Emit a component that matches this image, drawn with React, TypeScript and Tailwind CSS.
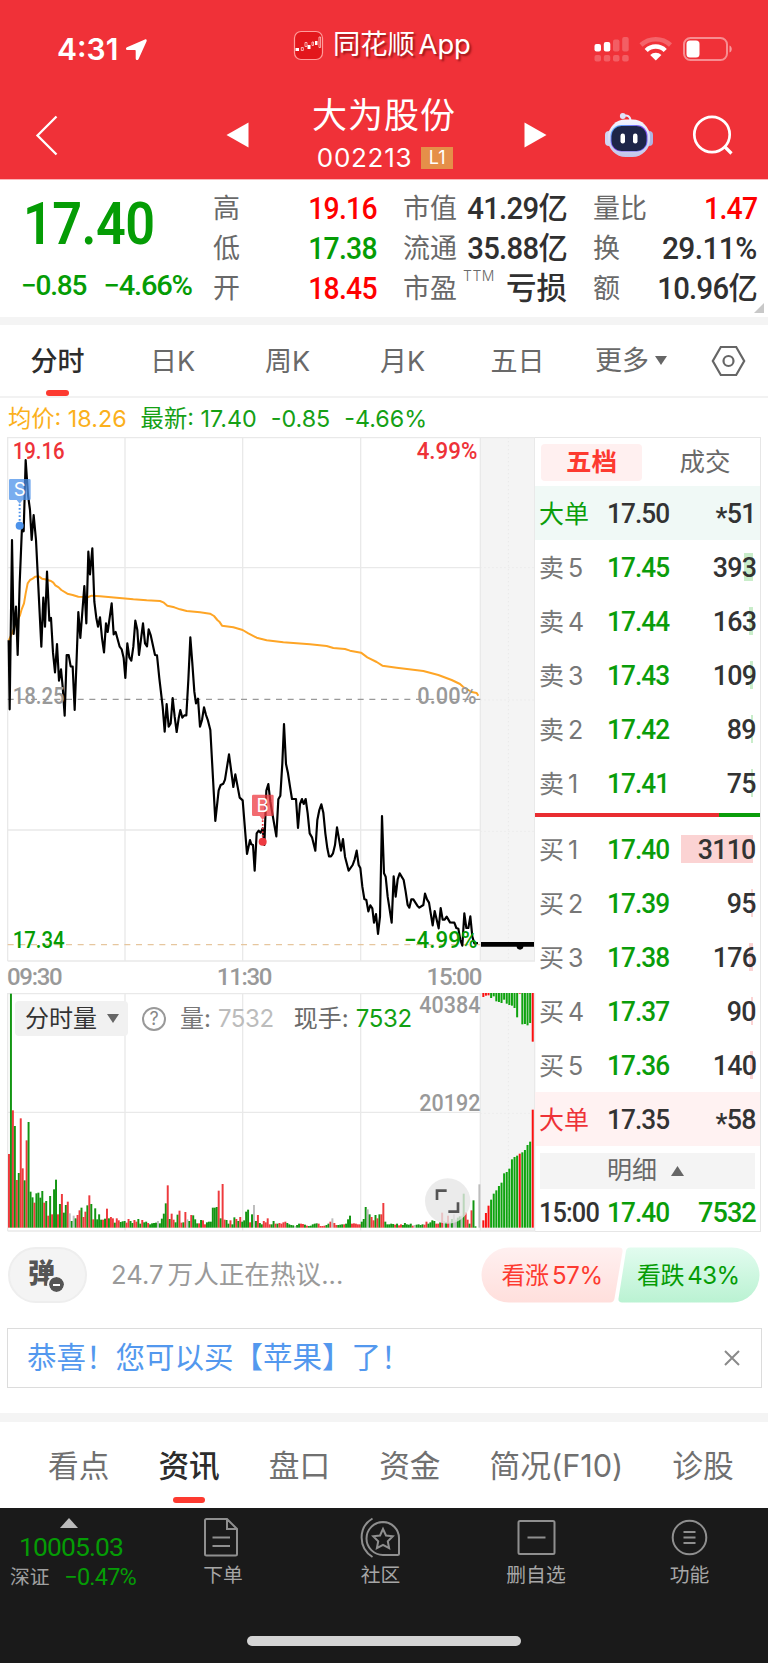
import type { ReactNode } from "react";
import clsx from "clsx";

type Tone = "up" | "down" | "ink";

const TONE_CLASS: Record<Tone, string> = {
  up: "text-[#ff0000]",
  down: "text-[#059c05]",
  ink: "text-[#303030]",
};

const NUM = "font-[Roboto,'Noto_Sans_CJK_SC',sans-serif]";

/* ---------- chart data (3 units per pixel) ---------- */

const PRICE_LINE =
  "26,610 29,817 36,309 41,591 48,509 53,654 59,440 66,269 71,283 77,69 84,174 90,219 95,309 101,234 108,309 115,449 124,629 130,482 135,569 141,404 148,551 153,543 159,647 165,706 171,621 177,731 183,697 188,749 194,836 200,654 206,654 212,688 218,689 224,819 229,689 235,525 241,603 253,447 259,559 265,344 270,412 277,334 283,494 289,543 294,569 300,541 306,603 312,646 318,559 323,585 335,499 341,592 347,585 359,629 365,637 371,663 376,723 382,619 388,661 394,671 400,629 406,551 412,579 417,654 429,559 435,619 441,628 446,577 452,594 465,654 471,655 478,724 488,809 494,884 500,801 506,869 512,859 518,783 524,839 530,885 536,844 541,819 547,842 553,835 559,835 565,729 571,601 577,679 583,764 588,799 594,785 600,869 606,849 612,811 618,834 624,851 631,879 646,1152 656,1060 662,1044 670,1040 675,1028 687,952 700,1050 706,1012 719,1082 728,1090 741,1251 750,1209 754,1222 759,1224 764,1301 770,1189 776,1181 782,1187 788,1174 793,1224 799,1061 805,1041 811,1094 817,1129 829,1198 835,1087 841,1076 847,979 852,861 858,981 864,1009 870,1049 876,1086 888,1086 894,1173 900,1101 906,1086 911,1101 917,1086 923,1129 929,1189 936,1201 946,1241 952,1149 958,1119 964,1102 970,1127 976,1189 982,1234 987,1258 993,1258 999,1249 1005,1224 1011,1171 1023,1241 1029,1206 1035,1259 1046,1301 1058,1284 1064,1267 1070,1241 1076,1284 1081,1293 1087,1349 1093,1386 1099,1389 1105,1423 1111,1405 1117,1414 1122,1457 1128,1431 1134,1491 1140,1439 1146,1137 1152,1309 1157,1319 1163,1379 1175,1457 1181,1318 1187,1379 1193,1327 1199,1309 1211,1329 1217,1364 1223,1404 1228,1412 1234,1387 1240,1387 1252,1406 1258,1412 1270,1404 1275,1370 1281,1387 1287,1397 1298,1465 1304,1422 1316,1474 1322,1413 1328,1448 1334,1448 1340,1439 1350,1456 1363,1457 1369,1473 1375,1475 1381,1509 1387,1526 1393,1429 1399,1473 1405,1473 1411,1438 1417,1499 1423,1519 1434,1518";

const AVERAGE_LINE =
  "26,611 36,589 50,554 60,535 65,517 72,499 77,469 83,439 90,429 98,425 106,419 116,418 126,425 135,427 153,432 160,437 166,445 176,451 184,459 202,470 218,474 235,479 265,480 275,476 300,478 350,482 400,487 440,490 480,492 490,496 502,506 523,511 540,517 560,522 600,526 630,530 642,537 652,549 658,554 666,566 700,571 728,579 745,589 770,602 800,610 850,616 930,622 980,627 1000,633 1035,636 1050,641 1083,647 1102,661 1130,675 1147,686 1190,692 1270,702 1315,714 1355,729 1380,741 1390,750 1415,765 1430,768 1435,776";

const MINUTE_VOLUMES =
  "r221 g702 r352 g305 r143 g164 r328 r178 g142 r262 g317 g108 g91 r75 g103 g105 g90 g110 r75 g80 r36 g95 r40 g115 g144 r40 g71 r101 g45 g68 r78 x43 g20 x36 g28 r38 r52 g60 r32 r48 g67 r97 g71 r25 g58 g25 g40 g24 r24 g27 r57 g28 r32 r28 g15 r28 r22 g17 g19 g20 r15 r26 g20 g14 r23 r18 g26 g12 r23 g16 g18 r14 g10 g13 g14 g15 x20 g13 g27 g42 g73 r127 g26 r42 r24 g16 g39 r51 r15 g16 r47 x25 g20 r38 g37 g25 g13 r13 g23 r22 r10 g16 g18 g18 g60 g60 g62 r111 g28 r131 r24 g23 g12 r22 g10 g31 r26 g20 r32 g18 g22 g48 g54 r16 g40 x68 g20 r38 g14 g10 r20 r16 r28 r10 g10 g20 r12 g12 r14 r12 r16 r18 g14 g10 g8 g7 x5 g8 g12 r12 r11 g9 r6 g5 g6 g10 g12 g13 r12 r5 r5 r6 g8 g12 r18 x28 r14 r8 g8 g9 g10 r10 g12 g25 g36 r12 r13 r12 r10 r10 g18 g26 g62 x55 g40 r32 r22 g38 r28 g40 r40 r74 g18 g10 g10 g12 g11 r9 g12 r7 r10 g8 g14 g10 g9 g12 r6 x8 g9 g10 g8 g10 r9 r18 g12 g16 g22 g20 r12 r12 g16 r45 x20 g16 r36 x18 g26 x40 x24 g30 g34 x36 g102 r46 r24 g12 r52 g82 g4 x0 x130";

const AUCTION_MATCHED = "r22 r44 r66 g84 g102 g112 g125 g135 g163 g167 g177 g205 g212 g216 r222 g226 g233 g248 g258 r354";
const AUCTION_UNMATCHED = "r12 r8 r7 g15 g10 g25 g27 g30 g20 g32 g36 g38 g45 g73 r2 g94 g93 g97 g90 r146";

const BAR_FILL: Record<string, string> = { r: "#ee3a3d", g: "#129512", x: "#bdbdbd" };
const AUCTION_FILL: Record<string, string> = { r: "#fb1010", g: "#0ea30e" };

function parseBars(source: string) {
  return source.split(" ").map((s) => ({ kind: s[0], size: Number(s.slice(1)) }));
}

const SUMMARY: { label: string; value: string; tone: Tone; sup?: string; fit: string }[][] = [
  [
    { label: "高", value: "19.16", tone: "up", fit: "scale-x-[0.93] tracking-[-0.8px]" },
    { label: "低", value: "17.38", tone: "down", fit: "scale-x-[0.93] tracking-[-0.8px]" },
    { label: "开", value: "18.45", tone: "up", fit: "scale-x-[0.93] tracking-[-0.8px]" },
  ],
  [
    { label: "市值", value: "41.29亿", tone: "ink", fit: "scale-x-[0.96] tracking-[-0.7px]" },
    { label: "流通", value: "35.88亿", tone: "ink", fit: "scale-x-[0.96] tracking-[-0.7px]" },
    { label: "市盈", value: "亏损", tone: "ink", sup: "TTM", fit: "tracking-normal" },
  ],
  [
    { label: "量比", value: "1.47", tone: "up", fit: "scale-x-[0.93] tracking-[-0.8px]" },
    { label: "换", value: "29.11%", tone: "ink", fit: "scale-x-[0.98] tracking-[-0.6px]" },
    { label: "额", value: "10.96亿", tone: "ink", fit: "scale-x-[0.96] tracking-[-0.7px]" },
  ],
];

const ASKS = [
  { label: "卖", level: 5, price: "17.45", volume: 393, bar: 9 },
  { label: "卖", level: 4, price: "17.44", volume: 163, bar: 4 },
  { label: "卖", level: 3, price: "17.43", volume: 109, bar: 3 },
  { label: "卖", level: 2, price: "17.42", volume: 89, bar: 2 },
  { label: "卖", level: 1, price: "17.41", volume: 75, bar: 2 },
];

const BIDS = [
  { label: "买", level: 1, price: "17.40", volume: 3110, bar: 72 },
  { label: "买", level: 2, price: "17.39", volume: 95, bar: 2 },
  { label: "买", level: 3, price: "17.38", volume: 176, bar: 4 },
  { label: "买", level: 4, price: "17.37", volume: 90, bar: 2 },
  { label: "买", level: 5, price: "17.36", volume: 140, bar: 3 },
];

/* ---------- header ---------- */

function StatusBar() {
  return (
    <div className="flex h-[90px] items-start text-white">
      <div className="flex w-[293px] items-center pt-[33px] pl-[57px]">
        <span className="text-[30px] leading-[32px] font-semibold">4:31</span>
        <svg className="ml-2 h-[21px] w-[21px]" viewBox="0 0 21 21" fill="#fff">
          <path d="M18.900.4 1 8.200c-1.700.8-1.200 2.900.5 2.900h7.500c.4 0 .7.300.7.700v7.800c0 1.800 2.200 2.100 2.900.5L20.600 2.200C21 .9 20.100-.1 18.900.4z" />
        </svg>
      </div>
      <div className="flex w-[300px] items-center pt-[28px]">
        <svg className="h-[32px] w-[32px]" viewBox="0 0 32 32" fill="none">
          <rect x="1.500" y="2.500" width="28" height="28" rx="6.500" fill="#e3171c" stroke="#ff9c9a" strokeWidth="1.200" />
          <path d="M2.500 19H6v3H2.500zM14.500 16h3v4h-3zM22 12h2.500v4H22z" fill="#fff" />
          <path d="M8.300 18.500v3h2v-3zM12 13.500v4h2v-4zM19 13v3.500h1.500V13zM26 8v10.500h1.600V8z" stroke="#ffd0ce" strokeWidth=".8" />
        </svg>
        <span className="ml-[8px] text-[27.300px] leading-[34px] [word-spacing:-4px] [text-shadow:2px_2px_2px_rgba(90,0,0,0.55)]">同花顺 App</span>
      </div>
      <div className="flex items-start gap-[10px] pt-[36px]">
        <svg className="h-[26px] w-[36px]" viewBox="0 0 36 26" fill="#fff">
          <rect x="1.500" y="8" width="6.500" height="7.500" rx="2" />
          <rect x="10.800" y="6" width="6.500" height="9.500" rx="2" />
          <g opacity=".22">
            <rect x="20" y="3.500" width="6.500" height="12" rx="2" />
            <rect x="29.200" y="1" width="6.500" height="14.500" rx="2" />
            <rect x="1.500" y="19" width="6.500" height="6.500" rx="2" />
            <rect x="10.800" y="19" width="6.500" height="6.500" rx="2" />
            <rect x="20" y="19" width="6.500" height="6.500" rx="2" />
            <rect x="29.200" y="19" width="6.500" height="6.500" rx="2" />
          </g>
        </svg>
        <svg className="h-[26px] w-[34px]" viewBox="0 0 34 26" fill="none" stroke="#fff" strokeWidth="4.500">
          <path d="M2 9a21.500 21.500 0 0 1 29.500 0" opacity=".25" />
          <path d="M7.200 14.500a13.500 13.500 0 0 1 19 0" />
          <path d="M11.200 19a7.800 7.800 0 0 1 11.200 0L16.800 24.600z" fill="#fff" stroke="none" />
        </svg>
        <svg className="ml-[-1px] h-[26px] w-[50px]" viewBox="0 0 50 26" fill="none">
          <rect x="2" y="2" width="43" height="22" rx="6.500" stroke="#fff" strokeOpacity=".45" strokeWidth="2" />
          <rect x="4.500" y="4.500" width="13" height="17" rx="3.500" fill="#fff" />
          <path d="M47.500 9.500c3 1 3 6 0 7z" fill="#fff" fillOpacity=".5" />
        </svg>
      </div>
    </div>
  );
}

function RobotIcon() {
  return (
    <svg className="h-[46px] w-[50px]" viewBox="0 0 50 46">
      <defs>
        <linearGradient id="shell" x1="0" y1="0" x2="0" y2="1">
          <stop offset="0" stopColor="#f4f5ff" />
          <stop offset="1" stopColor="#c2c6ea" />
        </linearGradient>
        <linearGradient id="visor" x1="0" y1="0" x2="1" y2="1">
          <stop offset="0" stopColor="#4fc3ff" />
          <stop offset=".5" stopColor="#8648ee" />
          <stop offset="1" stopColor="#5a68f0" />
        </linearGradient>
      </defs>
      <path d="M19 4c4-1.500 7.500 0 7.500 5" fill="none" stroke="#e5e7fb" strokeWidth="2" />
      <circle cx="18.800" cy="4" r="2.900" fill="#dfe2fa" />
      <rect x="1" y="19" width="8" height="15" rx="4" fill="#d0d5f3" />
      <rect x="41" y="19" width="8" height="15" rx="4" fill="#aeb5e2" />
      <rect x="4" y="7.500" width="42" height="37.500" rx="17.500" fill="url(#shell)" />
      <rect x="6.500" y="13" width="37" height="26.500" rx="11" fill="url(#visor)" />
      <rect x="7.500" y="14" width="35" height="25" rx="10" fill="#1d2548" />
      <rect x="16.500" y="21.500" width="4.500" height="10" rx="2.200" fill="#fff" />
      <rect x="29" y="21.500" width="4.500" height="10" rx="2.200" fill="#fff" />
    </svg>
  );
}

function TitleBar() {
  return (
    <div className="flex h-[89px] items-center text-white">
      <svg className="ml-[35px] h-[42px] w-[24px]" viewBox="0 0 24 42" fill="none" stroke="#fff" strokeWidth="2.300">
        <path d="M21.500 2.500 2.500 21.500l19 19" />
      </svg>
      <svg className="ml-[167px] h-[26px] w-[23px]" viewBox="0 0 23 26" fill="#fff">
        <path d="M22.500.5v25L.5 13z" />
      </svg>
      <div className="flex w-[275px] flex-col items-center pr-[5px] pb-[1px]">
        <div className="text-[35px] leading-[44px] tracking-[1px]">大为股份</div>
        <div className="flex items-center pt-[4px] pl-[2px]">
          <span className="text-[26px] leading-[34px] tracking-[0.7px]">002213</span>
          <span className="ml-[9px] h-[22px] w-[32px] bg-[#e58f49] text-center text-[18px] leading-[22px]">L1</span>
        </div>
      </div>
      <svg className="h-[26px] w-[23px]" viewBox="0 0 23 26" fill="#fff">
        <path d="M.5.5v25L22.500 13z" />
      </svg>
      <div className="ml-[57px]">
        <RobotIcon />
      </div>
      <svg className="ml-[38px] h-[40px] w-[42px]" viewBox="0 0 42 40" fill="none" stroke="#fff" strokeWidth="2.700">
        <circle cx="20" cy="19.500" r="17.700" />
        <path d="M32.500 31.500l7 7" strokeWidth="3.200" />
      </svg>
    </div>
  );
}

/* ---------- quote ---------- */

function QuoteSummary() {
  return (
    <section className="relative flex h-[137px]">
      <div className={clsx(NUM, "w-[213px] shrink-0 pt-[12px] font-medium text-[#059c05]")}>
        <div className="ml-[23px] origin-left scale-x-[0.87] text-[60px] leading-[64px] font-semibold tracking-[-0.6px]">17.40</div>
        <div className="flex justify-between pt-[14px] pr-[21px] pl-[21px] text-[28px] leading-[32px] tracking-[-1.2px]">
          <span>−0.85</span>
          <span className="origin-right scale-x-[1.04]">−4.66%</span>
        </div>
      </div>
      <div className="flex gap-[26px] pt-[9px]">
        {SUMMARY.map((column, i) => (
          <div key={i} className="w-[164px]">
            {column.map((item) => (
              <div key={item.label} className="flex h-[40px] items-center justify-between">
                <span className="flex items-start text-[27px] leading-[40px] text-[#696969]">
                  {item.label}
                  {item.sup && <sup className="ml-[6px] text-[14px] leading-[28px] font-light tracking-[0.5px]">{item.sup}</sup>}
                </span>
                <span className={clsx(NUM, "origin-right text-[30.500px] leading-[40px] font-medium whitespace-nowrap", item.fit, TONE_CLASS[item.tone])}>
                  {item.value}
                </span>
              </div>
            ))}
          </div>
        ))}
      </div>
      <svg className="absolute right-[4px] bottom-[4px] h-[10px] w-[10px]" viewBox="0 0 10 10" fill="#c8c8c8">
        <path d="M10 0v10H0z" />
      </svg>
    </section>
  );
}

function PeriodTabs() {
  return (
    <nav className="flex h-[73px] border-b-2 border-[#f2f2f2] text-[27px] leading-[73px] text-[#696969]">
      <div className="relative w-[115px] text-center font-medium text-[#2c2c2c]">
        分时
        <span className="absolute bottom-0 left-[46px] h-[6px] w-[23px] rounded-full bg-[#fd3a30]" />
      </div>
      {["日K", "周K", "月K", "五日"].map((label) => (
        <div key={label} className="w-[115px] text-center">
          {label}
        </div>
      ))}
      <div className="flex items-center pl-[20px]">
        更多
        <svg className="ml-[6px] h-[9px] w-[12px]" viewBox="0 0 12 9" fill="#666">
          <path d="M0 0h12L6 9z" />
        </svg>
      </div>
      <svg className="mt-[20px] ml-[44px] h-[32px] w-[35px]" viewBox="0 0 35 32" fill="none" stroke="#666" strokeWidth="2.200">
        <path d="M9.800 2h15.400l8 14-8 14H9.800l-8-14z" />
        <circle cx="17.500" cy="16" r="5" />
      </svg>
    </nav>
  );
}

function ChartLegend() {
  return (
    <div className="flex h-[39px] items-center pt-[2px] pl-[8px] text-[23.300px] leading-[37px] text-[#15a015]">
      <span className="text-[#fbb01c]">均价: 18.26</span>
      <span className="ml-[14px]">最新: 17.40</span>
      <span className="ml-[14px]">-0.85</span>
      <span className="ml-[14px]">-4.66%</span>
    </div>
  );
}

/* ---------- charts ---------- */

interface ChartLabelProps {
  x: number;
  y: number;
  length: number;
  fill: string;
  children: string;
}

function ChartLabel({ x, y, length, fill, children }: ChartLabelProps) {
  return (
    <text x={x} y={y} textLength={length} lengthAdjust="spacingAndGlyphs" fill={fill} className="font-[Roboto,sans-serif] text-[72px] font-medium">
      {children}
    </text>
  );
}

function PriceChart() {
  return (
    <svg className="block h-[525px] w-[535px]" viewBox="0 0 1605 1575" fill="none">
      <rect x="1441" y="0" width="164" height="1572" fill="#f4f4f4" />
      <g stroke="#e9e9e9" strokeWidth="4">
        <path d="M23 2H1605M23 392H1441M23 1179H1441M23 1572H1605" />
        <path d="M23 0V1572M375 0V1572M728 0V1572M1082 0V1572M1441 0V1572M1604 0V1572" />
        <path d="M1525 0V1572M1441 392H1605M1441 1183H1605M1441 789H1605" strokeDasharray="4 8" strokeWidth="3" />
      </g>
      <path d="M23 787H1441" stroke="#999" strokeWidth="4" strokeDasharray="18 17" />
      <path d="M23 1523H1441" stroke="#e6c69e" strokeWidth="4" strokeDasharray="18 17" />
      <polyline points={AVERAGE_LINE} stroke="#fea526" strokeWidth="6" strokeLinejoin="round" />
      <ChartLabel x={38} y={67} length={156} fill="#ee3238">19.16</ChartLabel>
      <ChartLabel x={1250} y={67} length={182} fill="#ee3238">4.99%</ChartLabel>
      <polyline points={PRICE_LINE} stroke="#000" strokeWidth="6.500" strokeLinejoin="round" />
      <ChartLabel x={38} y={800} length={156} fill="#999">18.25</ChartLabel>
      <ChartLabel x={1252} y={800} length={178} fill="#999">0.00%</ChartLabel>
      <ChartLabel x={38} y={1532} length={156} fill="#059c05">17.34</ChartLabel>
      <ChartLabel x={1212} y={1532} length={220} fill="#059c05">−4.99%</ChartLabel>
      <path d="M1443 1522H1602" stroke="#000" strokeWidth="14" />
      <circle cx="1560" cy="1528" r="10" fill="#000" />

      {/* sell marker */}
      <g fill="#4c92ea">
        <path d="M31 126H88a4 4 0 0 1 4 4V185a4 4 0 0 1-4 4H68L59 200 50 189H31a4 4 0 0 1-4-4V130a4 4 0 0 1 4-4z" opacity=".75" />
        <path d="M59 202V252" stroke="#4c92ea" strokeWidth="6" strokeDasharray="5 6" />
        <circle cx="59" cy="266" r="12" />
        <text x="59" y="178" textAnchor="middle" fill="#fff" className="font-[Inter,sans-serif] text-[56px]">S</text>
      </g>
      {/* buy marker */}
      <g fill="#ee3a40">
        <path d="M760 1073H817a4 4 0 0 1 4 4V1133a4 4 0 0 1-4 4H797L788 1149 779 1137H760a4 4 0 0 1-4-4V1077a4 4 0 0 1 4-4z" opacity=".75" />
        <path d="M788 1150V1205" stroke="#ee3a40" strokeWidth="5" strokeDasharray="5 6" />
        <circle cx="788" cy="1214" r="12" />
        <text x="788" y="1125" textAnchor="middle" fill="#fff" className="font-[Inter,sans-serif] text-[56px]">B</text>
      </g>
    </svg>
  );
}

function VolumeChart() {
  return (
    <div className="relative">
      <svg className="block h-[239px] w-[535px] overflow-visible" viewBox="0 0 1605 717" fill="none">
        <rect x="1441" y="0" width="164" height="714" fill="#f4f4f4" />
        <g stroke="#e9e9e9" strokeWidth="4">
          <path d="M23 2H1605M23 358H1441M23 714H1605" />
          <path d="M23 0V714M375 0V714M728 0V714M1082 0V714M1441 0V714M1604 0V714" />
          <path d="M1525 0V714M1441 361H1605" strokeDasharray="4 8" strokeWidth="3" />
        </g>
        {parseBars(MINUTE_VOLUMES).map((bar, i) => (
          <rect key={i} x={24 + i * 5.88} y={704 - bar.size} width="5.880" height={bar.size} fill={BAR_FILL[bar.kind]} />
        ))}
        {parseBars(AUCTION_MATCHED).map((bar, i) => (
          <rect key={i} x={1447 + i * 7.8} y={704 - bar.size} width="6" height={bar.size} fill={AUCTION_FILL[bar.kind]} />
        ))}
        {parseBars(AUCTION_UNMATCHED).map((bar, i) => (
          <rect key={i} x={1447 + i * 7.8} y="0" width="6" height={bar.size} fill={AUCTION_FILL[bar.kind]} />
        ))}
        <ChartLabel x={1258} y={61} length={183} fill="#999">40384</ChartLabel>
        <ChartLabel x={1258} y={354} length={183} fill="#999">20192</ChartLabel>
        <circle cx="1343" cy="624" r="68" fill="#e6e6e6" fillOpacity=".8" />
        <path d="M1311 621V593H1340M1374 628V656H1345" stroke="#555" strokeWidth="8" />
      </svg>
      <div className="absolute top-[8px] left-[15px] flex items-center text-[24px] leading-[35px] text-[#696969]">
        <div className="flex h-[35px] w-[113px] items-center rounded bg-[#f1f1f1] pl-[10px] text-[#333]">
          分时量
          <svg className="ml-[10px] h-[9px] w-[12px]" viewBox="0 0 12 9" fill="#666">
            <path d="M0 0h12L6 9z" />
          </svg>
        </div>
        <span className="ml-[14px] h-[24px] w-[24px] rounded-full border-2 border-[#999] text-center text-[18px] leading-[20px] text-[#888]">?</span>
        <span className="ml-[14px] text-[#777]">量:</span>
        <span className="ml-[7px] text-[24px] tracking-[-0.4px] text-[#bcbcbc]">7532</span>
        <span className="ml-[20px]">现手:</span>
        <span className="ml-[7px] text-[24px] tracking-[-0.3px] text-[#12a012]">7532</span>
      </div>
    </div>
  );
}

/* ---------- order book ---------- */

interface BookRowProps {
  label: ReactNode;
  price: string;
  volume: ReactNode;
  className?: string;
  labelClass?: string;
  priceClass?: string;
  barClass?: string;
  bar?: number;
}

function BookRow({ label, price, volume, className, labelClass = "text-[#777]", priceClass = "text-[#0a9d0a]", barClass, bar = 0 }: BookRowProps) {
  return (
    <div className={clsx("relative flex h-[54px] items-center pt-[1px] pr-[4px] pl-[4px]", className)}>
      {bar > 0 && <span className={clsx("absolute top-[13px] right-[7px] h-[28px]", barClass)} style={{ width: bar }} />}
      <span className={clsx("w-[68px] text-[25px] leading-[54px] [word-spacing:-3px]", labelClass)}>{label}</span>
      <span className={clsx(NUM, "origin-left scale-x-[0.92] text-[28.500px] leading-[54px] font-medium tracking-[-1px]", priceClass)}>{price}</span>
      <span className={clsx(NUM, "relative ml-auto origin-right scale-x-[0.94] text-[28.500px] leading-[54px] font-medium tracking-[-0.8px] text-[#333]")}>
        {volume}
      </span>
    </div>
  );
}

function BigOrderVolume({ value }: { value: number }) {
  return (
    <>
      <span className="inline-block translate-y-[4px]">*</span>
      {value}
    </>
  );
}

function OrderBook() {
  return (
    <aside className="h-[795px] w-[226px] border-t border-r border-b border-[#e6e6e6]">
      <div className="flex h-[48px] items-center pl-[6px] text-[25.500px]">
        <div className="h-[37px] w-[101px] shrink-0 rounded bg-[#fff0f0] text-center leading-[36px] font-bold text-[#fd3a30]">五档</div>
        <div className="flex-1 pl-[8px] text-center text-[#696969]">成交</div>
      </div>
      <BookRow
        label="大单"
        price="17.50"
        volume={<BigOrderVolume value={51} />}
        className="bg-[#f0f9f6]"
        labelClass="text-[#0a9d0a]"
        priceClass="text-[#333]"
      />
      {ASKS.map((row) => (
        <BookRow key={row.level} label={`${row.label} ${row.level}`} price={row.price} volume={row.volume} bar={row.bar} barClass="bg-[#c9edca]" />
      ))}
      <div className="mt-[3px] mb-[5px] flex h-[4px]">
        <div className="flex-1 bg-[#e92d31]" />
        <div className="w-[41px] bg-[#0a9d0a]" />
      </div>
      {BIDS.map((row) => (
        <BookRow key={row.level} label={`${row.label} ${row.level}`} price={row.price} volume={row.volume} bar={row.bar} barClass="bg-[#fbd3d3]" />
      ))}
      <BookRow
        label="大单"
        price="17.35"
        volume={<BigOrderVolume value={58} />}
        className="bg-[#fff2f2]"
        labelClass="text-[#ee3238]"
        priceClass="text-[#333]"
      />
      <div className="mx-[5px] mt-[7px] flex h-[36px] items-center justify-center bg-[#f4f4f4] pr-[4px] text-[25px] text-[#696969]">
        明细
        <svg className="ml-[14px] h-[10px] w-[13px]" viewBox="0 0 13 10" fill="#666">
          <path d="M0 10h13L6.500 0z" />
        </svg>
      </div>
      <div className={clsx(NUM, "flex h-[48px] items-center pr-[4px] pl-[4px] text-[28.500px] font-medium tracking-[-1px] text-[#0a9d0a]")}>
        <span className="w-[68px] origin-left scale-x-[0.89] text-[#333]">15:00</span>
        <span className="origin-left scale-x-[0.92]">17.40</span>
        <span className="ml-auto origin-right scale-x-[0.95]">7532</span>
      </div>
    </aside>
  );
}

/* ---------- lower page ---------- */

function DiscussBar() {
  return (
    <div className="flex h-[96px] items-start pt-[15px] pr-[8px] pl-[8px]">
      <div className="relative h-[56px] w-[79px] rounded-full border-2 border-[#eee] bg-[#f4f4f4] pl-[18px] text-[27px] leading-[50px] font-black text-[#555]">
        弹
        <span className="absolute top-[28px] left-[39px] flex h-[15px] w-[15px] items-center justify-center rounded-full bg-[#555] outline-2 outline-[#f4f4f4]">
          <span className="h-[2px] w-[7px] bg-white" />
        </span>
      </div>
      <span className="ml-[24px] text-[25.600px] leading-[56px] [word-spacing:-3px] text-[#9a9a9a]">24.7 万人正在热议...</span>
      <svg className="ml-auto h-[56px] w-[279px]" viewBox="0 0 279 56">
        <defs>
          <linearGradient id="bull" x1="0" y1="0" x2="0" y2="1">
            <stop offset="0" stopColor="#fff0f0" />
            <stop offset="1" stopColor="#ffdfdc" />
          </linearGradient>
          <linearGradient id="bear" x1="0" y1="0" x2="0" y2="1">
            <stop offset="0" stopColor="#e2fcef" />
            <stop offset="1" stopColor="#baf2d2" />
          </linearGradient>
        </defs>
        <path d="M28 .5H138q4 0 3.500 4L133.500 51.500q-.7 4-4.500 4H28a27.500 27.500 0 0 1 0-55z" fill="url(#bull)" />
        <path d="M149 .5H251a27.500 27.500 0 0 1 0 55H141q-4 0-3.500-4L145 4q.6-3.500 4-3.500z" fill="url(#bear)" />
        <g className="text-[24px] [word-spacing:-3px]">
          <text x="20.500" y="36.500" fill="#fd3a30" textLength="101.500">看涨 57%</text>
          <text x="156" y="36.500" fill="#059c05" textLength="103">看跌 43%</text>
        </g>
      </svg>
    </div>
  );
}

function PromoBanner() {
  return (
    <div className="mr-[6px] ml-[7px] flex h-[60px] items-center justify-between border-[1.5px] border-[#dcdcdc] pr-[21px] pl-[19px]">
      <span className="text-[29.500px] leading-none text-[#5398ee]">恭喜！您可以买【苹果】了！</span>
      <svg className="h-[16px] w-[16px]" viewBox="0 0 16 16" stroke="#8a8a8a" strokeWidth="2">
        <path d="M1 1l14 14M15 1 1 15" />
      </svg>
    </div>
  );
}

function SectionTabs() {
  return (
    <nav className="flex h-[86px] items-center gap-[49px] pt-[1px] pl-[48px] text-[30.700px] whitespace-nowrap text-[#707070]">
      {["看点", "资讯", "盘口", "资金", "简况(F10)", "诊股"].map((label) => (
        <div key={label} className={clsx("relative leading-[86px]", label === "资讯" && "font-medium text-[#2c2c2c]")}>
          {label}
          {label === "资讯" && <span className="absolute bottom-[6px] left-[15px] h-[6px] w-[32px] rounded-full bg-[#fd3a30]" />}
        </div>
      ))}
    </nav>
  );
}

const ACTIONS: { label: string; icon: ReactNode; width: string }[] = [
  {
    label: "下单",
    width: "w-[154px]",
    icon: (
      <>
        <path d="M4.500 2H25l10 10v25a1.500 1.500 0 0 1-1.500 1.500h-29A1.500 1.500 0 0 1 3 37V3.500A1.500 1.500 0 0 1 4.500 2zM25 2v10h10" />
        <path d="M10.500 20.500h17.500M10.500 29h17.500" />
      </>
    ),
  },
  {
    label: "社区",
    width: "w-[161px]",
    icon: (
      <>
        <path d="M23 5a16.500 16.500 0 0 0 0 33h14.500a1.500 1.500 0 0 0 1.500-1.500V21A16.200 16.200 0 0 0 23 5z" />
        <path d="M12.500 1.500C-2 10-2 31 12.500 40" />
        <path d="M23 12l3 6.500 6.800.8-5 5 1.300 6.900-6.100-3.400-6.100 3.400 1.300-6.900-5-5 6.800-.8z" />
      </>
    ),
  },
  {
    label: "删自选",
    width: "w-[150px]",
    icon: (
      <>
        <rect x="3.500" y="4" width="36" height="33" rx="1.500" />
        <path d="M12.500 20.500h18" />
      </>
    ),
  },
  {
    label: "功能",
    width: "w-[157px]",
    icon: (
      <>
        <circle cx="20.500" cy="20.500" r="16.800" />
        <path d="M14.500 15h12M14.500 20.500h12M14.500 26h12" />
      </>
    ),
  },
];

function BottomBar() {
  return (
    <footer className="flex h-[155px] flex-col bg-[#1a1a1a]">
      <div className="flex h-[128px] text-[19.800px]">
        <div className="w-[146px] pt-[10px]">
          <svg className="ml-[60px] h-[10px] w-[18px]" viewBox="0 0 18 10" fill="#bbb">
            <path d="M0 10h18L9 0z" />
          </svg>
          <div className={clsx(NUM, "mt-[4px] pr-[4px] text-center text-[26.500px] leading-[30px] tracking-[-0.9px] text-[#059c05]")}>10005.03</div>
          <div className="mt-[2px] flex items-center justify-between pr-[10px] pl-[10px] leading-[27px] text-[#a0a0a0]">
            深证
            <span className={clsx(NUM, "text-[23.500px] tracking-[-0.8px] text-[#059c05]")}>−0.47%</span>
          </div>
        </div>
        {ACTIONS.map((action) => (
          <div key={action.label} className={clsx("flex shrink-0 flex-col items-center pt-[9px] text-[#a6a6a6]", action.width)}>
            <svg className="h-[41px] w-[42px]" viewBox="0 0 42 41" fill="none" stroke="#8f8f8f" strokeWidth="2">
              {action.icon}
            </svg>
            <span className="mt-[4px] leading-[26px]">{action.label}</span>
          </div>
        ))}
      </div>
      <div className="mx-auto h-[10px] w-[274px] rounded-full bg-[#d4d4d4]" />
    </footer>
  );
}

export default function App() {
  return (
    <main className="h-[1663px] w-[768px] overflow-hidden bg-white font-[Inter,'Noto_Sans_CJK_SC',sans-serif]">
      <header className="h-[179px] bg-[#f03138]">
        <StatusBar />
        <TitleBar />
      </header>
      <div className="h-px bg-[#fbb5b8]" />
      <QuoteSummary />
      <div className="h-[8px] bg-[#f4f4f4]" />
      <PeriodTabs />
      <ChartLegend />
      <section className="flex h-[795px]">
        <div className="w-[535px]">
          <PriceChart />
          <div className={clsx(NUM, "flex h-[31px] items-center justify-between pr-[54px] pb-[2px] pl-[7px] text-[24px] font-medium tracking-[-1.300px] text-[#999]")}>
            <span>09:30</span>
            <span>11:30</span>
            <span>15:00</span>
          </div>
          <VolumeChart />
        </div>
        <OrderBook />
      </section>
      <DiscussBar />
      <PromoBanner />
      <div className="mt-[25px] h-[9px] bg-[#f4f4f4]" />
      <SectionTabs />
      <BottomBar />
    </main>
  );
}
